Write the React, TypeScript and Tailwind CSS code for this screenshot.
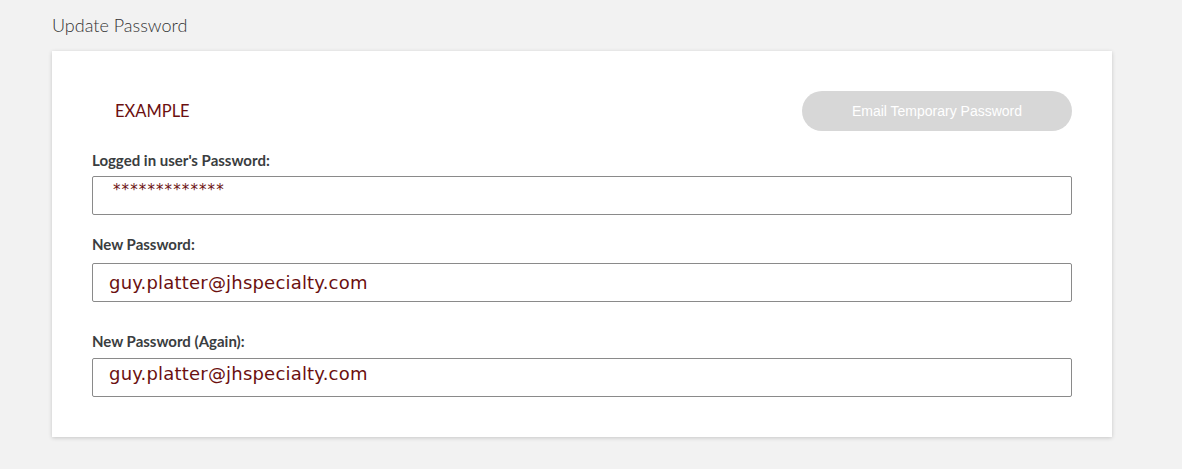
export default function App() {
  const fields = [
    { label: "New Password:", value: "guy.platter@jhspecialty.com", gap: "mt-[20px]", inputGap: "mt-[10px]", pad: "pt-[4px]" },
    { label: "New Password (Again):", value: "guy.platter@jhspecialty.com", gap: "mt-[30px]", inputGap: "mt-[8px]", pad: "pt-[0px]" },
  ];

  return (
    <main className="min-h-screen w-full bg-[#f2f2f2] pt-[13px] pb-[32px] pl-[52px] pr-[70px]" style={{ fontFamily: "Lato, 'Liberation Sans', sans-serif" }}>
      <h1 className="text-[18px] font-light text-[#333] leading-[24px]">Update Password</h1>

      <section className="mt-[14px] bg-white shadow-[0_1px_4px_rgba(0,0,0,0.18)] px-[40px] pt-[40px] pb-[40px]">
        {/* Header */}
        <div className="flex items-center justify-between">
          <span className="ml-[23px] text-[16.5px] text-[#6b1010]">EXAMPLE</span>
          <button
            type="button"
            className="w-[270px] h-[40px] rounded-full bg-[#d7d7d7] text-white text-[14px]"
            style={{ fontFamily: "'Liberation Sans', Arial, sans-serif" }}
          >
            Email Temporary Password
          </button>
        </div>

        {/* Current password */}
        <label className="block mt-[20px] text-[15px] font-bold text-[#3a3d40] leading-[18px]">
          Logged in user's Password:
        </label>
        <div
          className="mt-[7px] h-[39px] border border-[#8a8a8a] rounded-[2px] pl-[20px] pt-[3px] text-[15px] text-[#6b1010] tracking-[1.1px] leading-[20px]"
          style={{ fontFamily: "'DejaVu Sans', sans-serif" }}
        >
          *************
        </div>

        {fields.map((f) => (
          <div key={f.label}>
            <label className={`block ${f.gap} text-[15px] font-bold text-[#3a3d40] leading-[18px]`}>{f.label}</label>
            <div
              className={`${f.pad} ${f.inputGap} h-[39px] border border-[#8a8a8a] rounded-[2px] pl-[16px] text-[18px] leading-[30px] tracking-[0.2px] text-[#6b1010]`}
              style={{ fontFamily: "'DejaVu Sans', 'Noto Sans', sans-serif" }}
            >
              {f.value}
            </div>
          </div>
        ))}
      </section>
    </main>
  );
}
